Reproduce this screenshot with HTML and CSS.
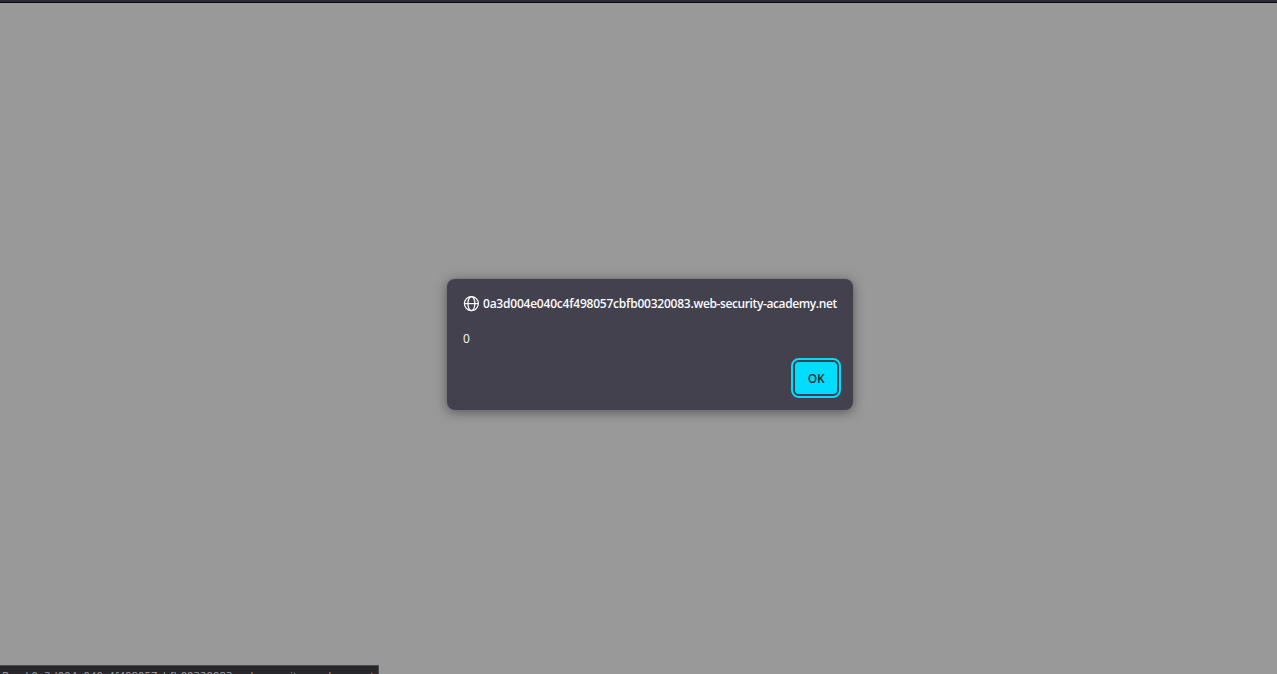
FILE: index.html
```html
<!DOCTYPE html>
<html lang="en">
<head>
<meta charset="utf-8">
<title>Alert</title>
<link rel="stylesheet" href="styles.css">
</head>
<body>
<div class="toolbar-edge"></div>
<main class="page">
  <section class="dialog" role="alertdialog">
    <header class="dialog-head">
      <svg class="globe" viewBox="0 0 16 16" fill="none" stroke="currentColor" stroke-width="1.25">
        <circle cx="8.4" cy="7.6" r="7"/>
        <ellipse cx="8.4" cy="7.6" rx="3.5" ry="7"/>
        <path d="M1.4 7.6h14"/>
      </svg>
      <span class="origin"><span class="subdomain">0a3d004e040c4f498057cbfb00320083.</span>web-security-academy.net</span>
    </header>
    <p class="message">0</p>
    <button class="ok">OK</button>
  </section>
</main>
<div class="status"><span class="status-text">Read 0a3d004e040c4f498057cbfb00320083.web-security-academy.net</span></div>
</body>
</html>
```
FILE: styles.css
```css
* { box-sizing: border-box; }
body {
  margin: 0;
  height: 674px;
  overflow: hidden;
  display: flex;
  flex-direction: column;
  background: #99999a;
  font-family: "Open Sans", "Noto Sans", sans-serif;
}
.toolbar-edge {
  flex: none;
  height: 3px;
  background: #2b2a33;
  border-bottom: 1px solid #0c0c0d;
}
.page {
  flex: 1;
  padding: 276px 0 0 447px;
}
.dialog {
  width: 406px;
  height: 131px;
  padding: 16px;
  display: flex;
  flex-direction: column;
  border-radius: 8px;
  background: #42414d;
  color: #fbfbfe;
  box-shadow: 0 0 0 1px rgba(120, 120, 124, .5), 0 2px 12px rgba(20, 20, 26, .5);
}
.dialog-head {
  display: flex;
  align-items: center;
  gap: 4px;
  height: 17px;
}
.globe { flex: none; width: 16px; height: 16px; overflow: visible; }
.origin {
  font-size: 12px;
  font-weight: 600;
  line-height: 17px;
  letter-spacing: -0.39px;
  white-space: nowrap;
}
.subdomain { letter-spacing: -0.225px; }
.message {
  margin: 18px 0 0;
  font-size: 12px;
  line-height: 17px;
}
.ok {
  align-self: flex-end;
  flex: none;
  width: 42px;
  height: 32px;
  margin: 15px 0 0;
  padding: 1px 0 0;
  border: 0;
  border-radius: 4px;
  outline: 2px solid #00ddff;
  outline-offset: 2px;
  background: #00ddff;
  color: #2b2a33;
  font: 600 12px/31px "Open Sans", sans-serif;
  letter-spacing: -0.4px;
}
.status {
  position: absolute;
  left: 0;
  top: 665px;
  width: 379px;
  height: 9px;
  overflow: hidden;
  border-top: 1px solid #4a4a50;
  border-right: 1px solid #4a4a50;
  background: #28272c;
  color: #a2a2a8;
}
.status-text {
  display: block;
  padding-left: 2px;
  padding-top: 2px;
  font: 11px/15px "Open Sans", sans-serif;
  letter-spacing: 0.18px;
  white-space: nowrap;
}
```
